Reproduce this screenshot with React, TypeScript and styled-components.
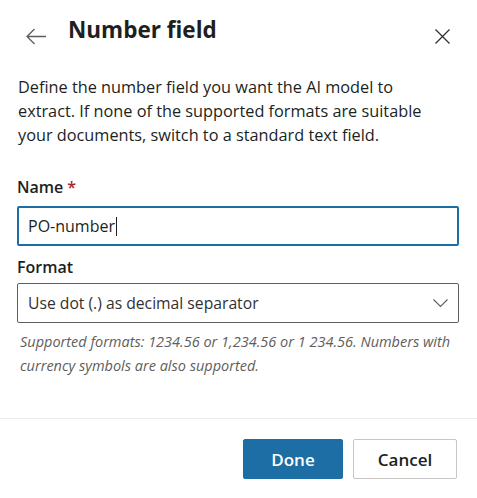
import React from "react";
import styled, { createGlobalStyle } from "styled-components";

const Global = createGlobalStyle`
  html, body { margin: 0; padding: 0; background: #fff; }
  body { font-family: "Segoe UI", "Open Sans", sans-serif; color: #201f1e; }
  * { box-sizing: border-box; }
`;

const Panel = styled.div`
  width: 477px;
  height: 498px;
  background: #fff;
  display: flex;
  flex-direction: column;
`;

const Header = styled.div`
  display: flex;
  align-items: center;
  height: 64px;
  padding: 20px 19px 12px 20px;
`;

const IconButton = styled.button`
  width: 32px;
  height: 32px;
  border: none;
  background: transparent;
  padding: 0;
  display: flex;
  align-items: center;
  justify-content: center;
  cursor: pointer;
`;

const Title = styled.h1`
  margin: 0 0 0 16px;
  flex: 1;
  font-size: 22.5px;
  font-weight: 700;
  color: #201f1e;
  line-height: 30px;
  position: relative;
  top: -6px;
`;

const Body = styled.div`
  padding: 11px 18px 0 18px;
  flex: 1;
  display: flex;
  flex-direction: column;
`;

const Description = styled.p`
  margin: 0;
  max-width: 425px;
  font-size: 16.3px;
  line-height: 24px;
  color: #201f1e;
`;

const Label = styled.label<{ $top: number; $bottom: number }>`
  display: block;
  font-size: 16px;
  font-weight: 600;
  line-height: 22px;
  margin-top: ${(p) => p.$top}px;
  margin-bottom: ${(p) => p.$bottom}px;
  margin-left: -1px;
  color: #201f1e;
`;

const Required = styled.span`
  color: #a4262c;
  margin-left: 4px;
`;

const TextBox = styled.div`
  margin-left: -1px;
  height: 40px;
  border: 2px solid #1c6ea4;
  border-radius: 2px;
  padding: 0 9px;
  display: flex;
  align-items: center;
  font-size: 16px;
  color: #201f1e;
`;

const Caret = styled.span`
  display: inline-block;
  width: 1px;
  height: 19px;
  background: #201f1e;
  margin-left: 1px;
`;

const Select = styled.div`
  margin-left: -1px;
  height: 40px;
  border: 1px solid #605e5c;
  border-radius: 2px;
  padding: 0 10px;
  display: flex;
  align-items: center;
  justify-content: space-between;
  font-size: 15.7px;
  color: #323130;
`;

const Helper = styled.p`
  margin: 7px 0 0 2px;
  font-size: 14.5px;
  line-height: 24px;
  font-style: italic;
  color: #605e5c;
`;

const Footer = styled.div`
  border-top: 1px solid #edebe9;
  height: 80px;
  display: flex;
  justify-content: flex-end;
  align-items: flex-start;
  gap: 10px;
  padding: 20px 20px 0 0;
`;

const Button = styled.button<{ $primary?: boolean }>`
  height: 40px;
  width: ${(p) => (p.$primary ? 100 : 104)}px;
  border-radius: 2px;
  font-family: inherit;
  font-size: 17px;
  font-weight: 600;
  border: 1px solid ${(p) => (p.$primary ? "#1c6ea4" : "#c8c6c4")};
  background: ${(p) => (p.$primary ? "#1c6ea4" : "#fff")};
  color: ${(p) => (p.$primary ? "#fff" : "#201f1e")};
  cursor: pointer;
`;

export default function App() {
  return (
    <Panel>
      <Global />
      <Header>
        <IconButton aria-label="Back">
          <svg width="22" height="17" viewBox="0 0 22 17" fill="none" stroke="#605e5c" strokeWidth="1.3">
            <path d="M21 8.5H2M9.5 1L2 8.5l7.5 7.5" />
          </svg>
        </IconButton>
        <Title>Number field</Title>
        <IconButton aria-label="Close">
          <svg width="17" height="17" viewBox="0 0 17 17" fill="none" stroke="#323130" strokeWidth="1.3">
            <path d="M1.5 1.5l14 14M15.5 1.5l-14 14" />
          </svg>
        </IconButton>
      </Header>
      <Body>
        <Description>
          Define the number field you want the AI model to extract. If none of the supported formats are suitable
          your documents, switch to a standard text field.
        </Description>
        <Label $top={29} $bottom={8}>
          Name<Required>*</Required>
        </Label>
        <TextBox role="textbox">
          PO-number
          <Caret />
        </TextBox>
        <Label $top={10} $bottom={5}>Format</Label>
        <Select>
          <span>Use dot (.) as decimal separator</span>
          <svg width="15" height="9" viewBox="0 0 15 9" fill="none" stroke="#605e5c" strokeWidth="1.1">
            <path d="M0.5 0.5L7.5 7.5l7-7" />
          </svg>
        </Select>
        <Helper>
          Supported formats: 1234.56 or 1,234.56 or 1 234.56. Numbers with currency symbols are also supported.
        </Helper>
      </Body>
      <Footer>
        <Button $primary>Done</Button>
        <Button>Cancel</Button>
      </Footer>
    </Panel>
  );
}
